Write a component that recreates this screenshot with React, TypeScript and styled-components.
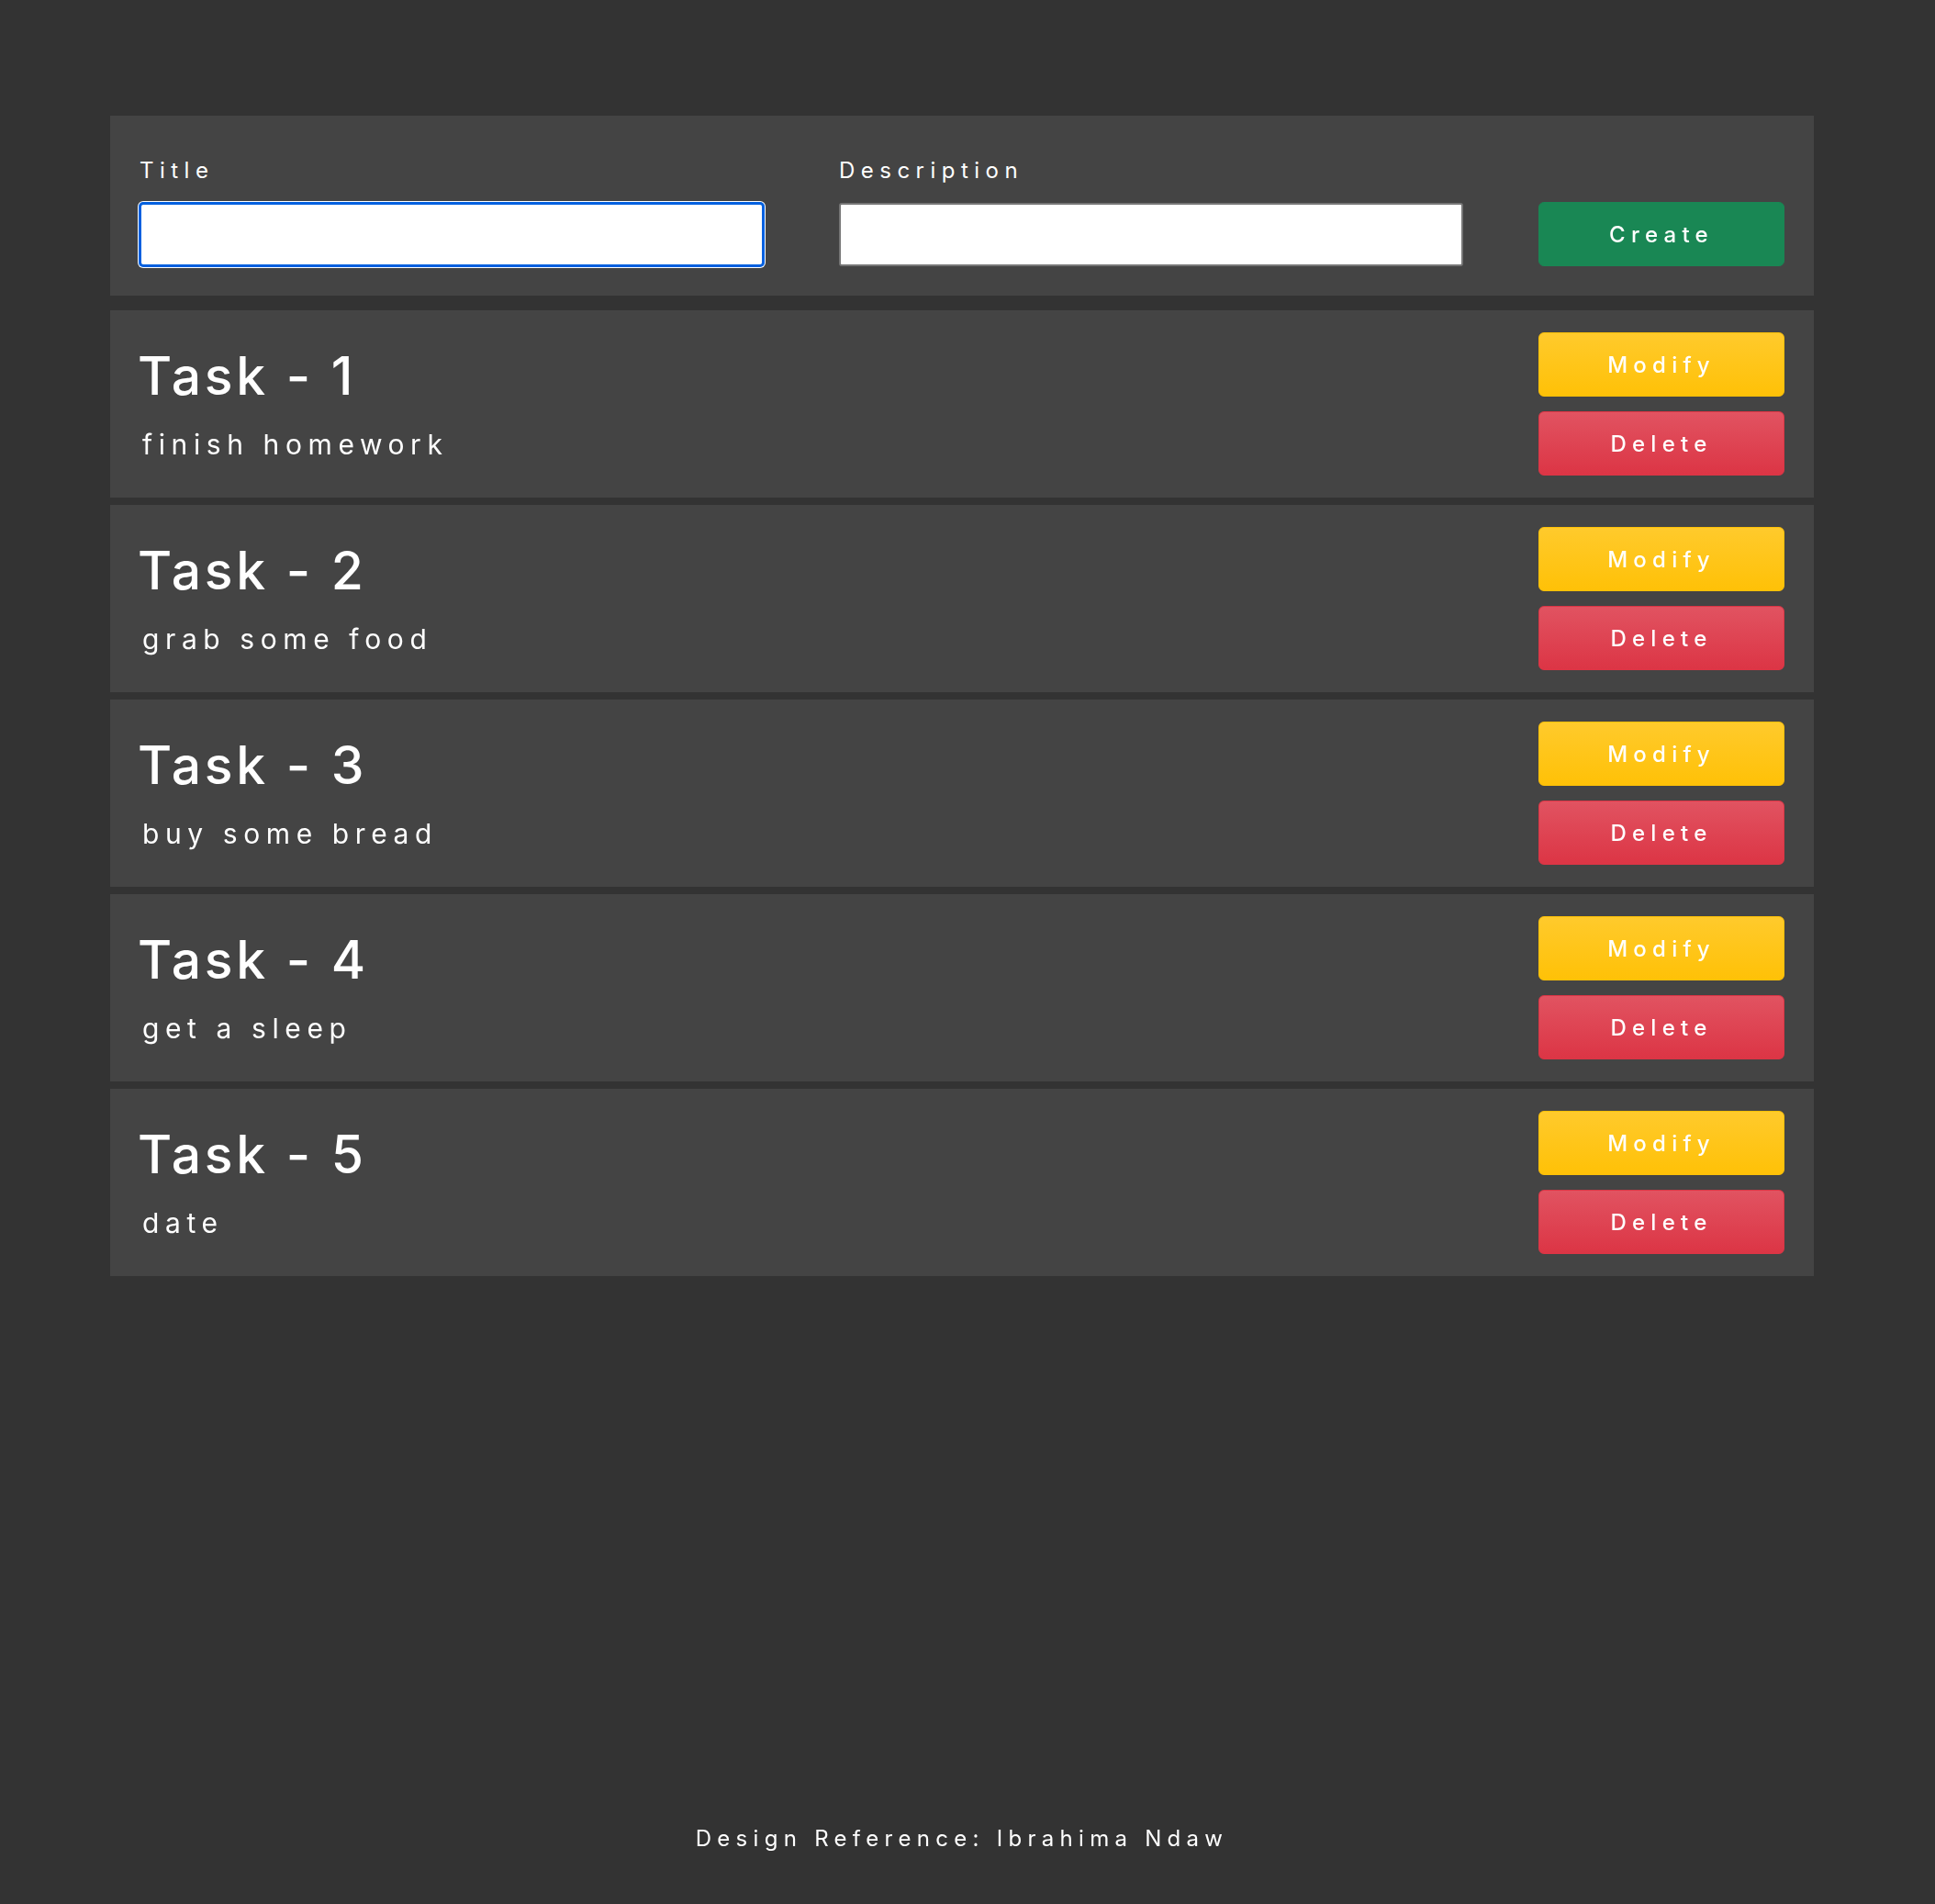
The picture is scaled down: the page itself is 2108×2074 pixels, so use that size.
import React, { FC } from 'react';
import styled, { createGlobalStyle, css } from 'styled-components';

const GlobalStyle = createGlobalStyle`
  * {
    box-sizing: border-box;
  }

  body {
    margin: 0;
    background: #333333;
    color: #ffffff;
    font-family: Inter, "Noto Sans", "Liberation Sans", sans-serif;
  }
`;

const Page = styled.div`
  min-height: 100vh;
  display: flex;
  flex-direction: column;
  padding: 126px 132px 0 120px;
`;

const FormPanel = styled.form`
  background: #444444;
  padding: 48px 32px 32px;
  display: grid;
  grid-template-columns: 680px 680px 268px;
  justify-content: space-between;
  align-items: end;
`;

const Field = styled.label`
  display: flex;
  flex-direction: column;
`;

const FieldLabel = styled.span`
  font-size: 24px;
  line-height: 1;
  letter-spacing: 0.27em;
  margin-bottom: 23px;
`;

const TextInput = styled.input`
  height: 69px;
  padding: 0 12px;
  border: 2px solid #767676;
  border-radius: 3px;
  background: #ffffff;
  color: #000000;
  font-family: inherit;
  font-size: 28px;
  caret-color: #000000;
  outline: none;

  &:focus {
    border-color: #0060df;
    border-radius: 4px;
    box-shadow: 0 0 0 1px #0060df, 0 0 0 2px #ffffff;
  }
`;

type Variant = 'create' | 'modify' | 'delete';

const variants: Record<Variant, ReturnType<typeof css>> = {
  create: css`
    background: #198754;
    border-color: #198754;
  `,
  modify: css`
    background: linear-gradient(180deg, #ffca2c, #ffc107);
    border-color: #ffc107;
  `,
  delete: css`
    background: linear-gradient(180deg, #e15361, #dc3545);
    border-color: #dc3545;
  `,
};

const Button = styled.button<{ $variant: Variant }>`
  height: 70px;
  width: 268px;
  padding: 0;
  border: 1px solid transparent;
  border-radius: 6px;
  color: #ffffff;
  font-family: inherit;
  font-size: 24px;
  font-weight: 500;
  letter-spacing: 0.26em;
  cursor: pointer;
  ${p => variants[p.$variant]}
`;

const TaskList = styled.div`
  margin-top: 16px;
  display: flex;
  flex-direction: column;
  gap: 8px;
`;

const TaskCard = styled.div`
  background: #444444;
  padding: 24px 32px;
  display: flex;
  align-items: center;
  justify-content: space-between;
`;

const TaskText = styled.div`
  display: flex;
  flex-direction: column;
`;

const TaskTitle = styled.h2`
  margin: 0 0 0 -2px;
  font-size: 57px;
  line-height: 1;
  font-weight: 500;
  letter-spacing: 0.065em;
`;

const TaskDescription = styled.p`
  margin: 31px 0 0 3px;
  font-size: 30px;
  line-height: 1;
  letter-spacing: 0.22em;
`;

const Actions = styled.div`
  display: flex;
  flex-direction: column;
  gap: 16px;
`;

const Footer = styled.footer`
  margin-top: auto;
  padding-bottom: 59px;
  text-align: center;
  font-size: 24px;
  line-height: 1;
  letter-spacing: 0.262em;
`;

const tasks = [
  { id: 1, description: 'finish homework' },
  { id: 2, description: 'grab some food' },
  { id: 3, description: 'buy some bread' },
  { id: 4, description: 'get a sleep' },
  { id: 5, description: 'date' },
];

const TaskItem: FC<{ id: number; description: string }> = ({ id, description }) => (
  <TaskCard>
    <TaskText>
      <TaskTitle>Task - {id}</TaskTitle>
      <TaskDescription>{description}</TaskDescription>
    </TaskText>
    <Actions>
      <Button type="button" $variant="modify">Modify</Button>
      <Button type="button" $variant="delete">Delete</Button>
    </Actions>
  </TaskCard>
);

export default function App() {
  return (
    <>
      <GlobalStyle />
      <Page>
        <FormPanel onSubmit={e => e.preventDefault()}>
          <Field>
            <FieldLabel>Title</FieldLabel>
            <TextInput type="text" autoFocus />
          </Field>
          <Field>
            <FieldLabel>Description</FieldLabel>
            <TextInput type="text" />
          </Field>
          <Button type="submit" $variant="create">Create</Button>
        </FormPanel>
        <TaskList>
          {tasks.map(t => (
            <TaskItem key={t.id} id={t.id} description={t.description} />
          ))}
        </TaskList>
        <Footer>Design Reference: Ibrahima Ndaw</Footer>
      </Page>
    </>
  );
}
